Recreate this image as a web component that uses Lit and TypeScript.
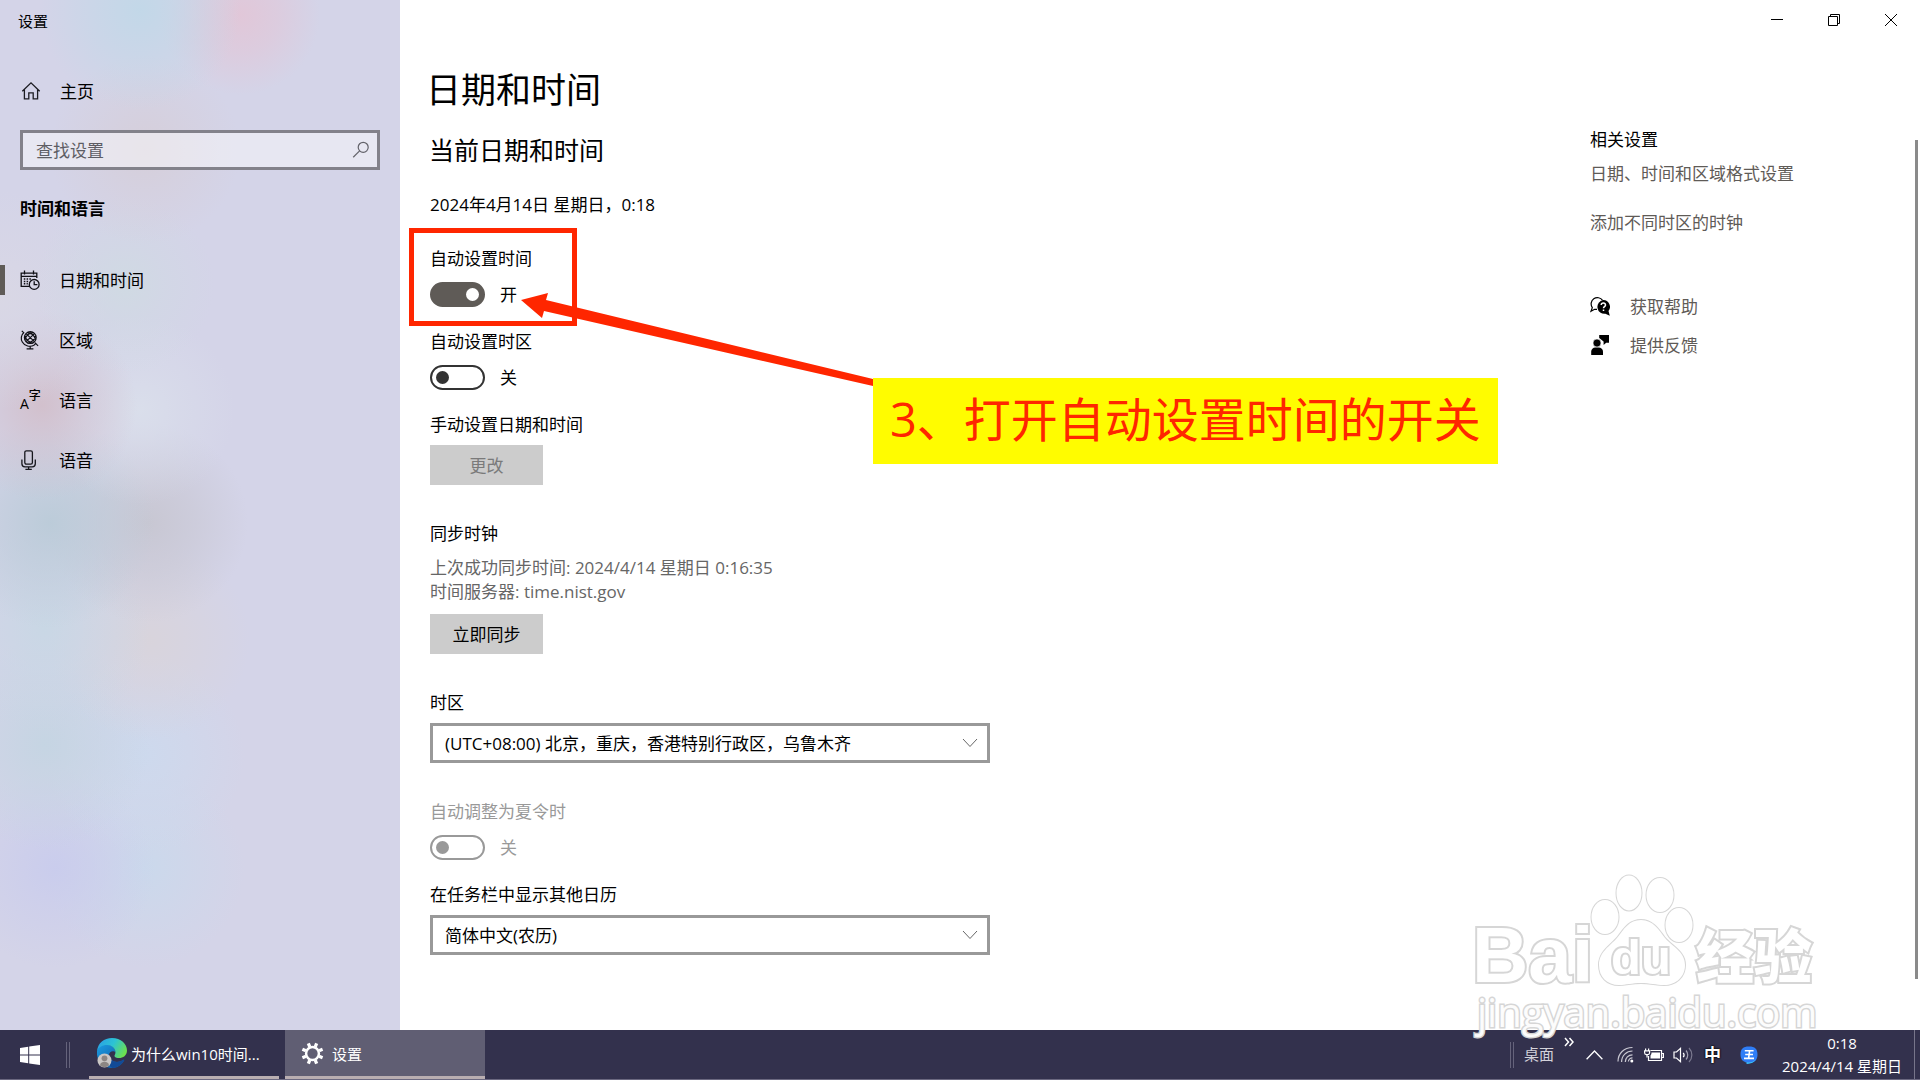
import { LitElement, html, svg, css, nothing } from "lit";
import { customElement, property, state } from "lit/decorators.js";
import { classMap } from "lit/directives/class-map.js";

const icons = {
  home: svg`<svg viewBox="0 0 20 20" width="20" height="20" fill="none" stroke="#1c1c22" stroke-width="1.3"><path d="M1.3 10.2 10 1.8l8.7 8.4M3.4 8.6v9.2h4.4v-6h4.4v6h4.4V8.6"/></svg>`,
  date: svg`<svg viewBox="0 0 20 20" width="20" height="20" fill="none" stroke="#101016" stroke-width="1.3"><path d="M9 16.400H1.200V3.100h15.600v5M1.200 6.400h15.600M4.500.600v4M13.500.600v4"/><circle cx="14.200" cy="14.400" r="4.900"/><path d="M14.200 11.200v3.400h3.200"/><path stroke-width="1.500" stroke-dasharray="1.500 1.300" d="M3.800 9h7.500M3.800 11.400h5M3.800 13.800h4"/></svg>`,
  region: svg`<svg viewBox="0 0 20 20" width="20" height="20" fill="none" stroke="#101016" stroke-width="1.200"><circle cx="10.300" cy="7.600" r="5.900"/><path d="M6 3.600 14.500 11.600M14.500 3.600 6 11.600M7.200 2.600C10.500 2.400 15 5.500 15.600 9.800M13.400 2.600C10 2.400 5.500 5.500 5 9.800M4.800 5.600c.8 4 4.500 7.400 8.400 7.400M15.800 5.600c-.8 4-4.500 7.400-8.400 7.400"/><path d="M1.800.800 3.700 2.700C1 5 .600 9 2.300 12c2.300 4.200 8 5.500 12 2.900l1.300-1.300M14.900 12.700l3.200 3.200M10.200 15.800v3M6.600 18.900h6.800"/></svg>`,
  language: html`<span class="lang"><span class="lang-a">A</span><span class="lang-z">字</span></span>`,
  speech: svg`<svg viewBox="0 0 20 20" width="20" height="20" fill="none" stroke="#16161c" stroke-width="1.3"><rect x="4.800" y=".8" width="7.600" height="13.400" rx="1.600"/><path d="M1.900 9.600v4.200c0 1.800 1.200 3 3 3h7.400c1.800 0 3-1.200 3-3V9.600M8.600 16.800v2.600M5.400 19.300h6.400"/></svg>`,
  search: svg`<svg viewBox="0 0 18 18" width="18" height="18" fill="none" stroke="#62626a" stroke-width="1.200"><circle cx="11.200" cy="6.300" r="5"/><path d="M7.600 9.900 1.200 16.200"/></svg>`,
  chevron: svg`<svg class="chev" viewBox="0 0 16 10" width="16" height="10" fill="none" stroke="#666" stroke-width="1"><path d="M1 1l7 7.500L15 1"/></svg>`,
  help: svg`<svg viewBox="0 0 20 20" width="20" height="20"><path fill="none" stroke="#000" stroke-width="1.200" d="M7 13.300H4.600L1 15.200l1.300-3.600A6.200 6.200 0 1 1 12.600 4.300"/><path d="M13.300 4a6.800 6.800 0 0 1 5.200 11l1.300 4.700-4.400-2A6.800 6.800 0 1 1 13.300 4z"/><path fill="none" stroke="#fff" stroke-width="1.500" d="M11.200 9c.1-2.600 4.500-2.500 4.300.1-.1 1.400-2 1.600-2 3.100M13.500 13.400v1.500"/></svg>`,
  feedback: svg`<svg viewBox="0 0 20 20" width="20" height="20"><path d="M9.200 0H19v7.800h-2.800L13.600 10V6.600L9.200 3z"/><circle cx="7" cy="8" r="4" stroke="#fff" stroke-width=".6"/><path d="M1.200 20v-3.200c0-2.700 1.800-4.300 4.200-4.300h3.200c2.500 0 4.400 1.600 4.400 4.300V20z"/></svg>`,
};

const sharedText = css`
  * { box-sizing: border-box; }
  button, input, select { font: inherit; color: inherit; }
`;

@customElement("toggle-field")
class ToggleField extends LitElement {
  @property() label = "";
  @property({ type: Boolean }) on = false;
  @property({ type: Boolean }) disabled = false;

  static styles = [sharedText, css`
    :host { display: block; }
    .label { display: block; line-height: 26px; }
    .row { display: flex; align-items: center; gap: 15px; height: 25px; margin-top: 10px; line-height: 26px; }
    .switch {
      appearance: none; margin: 0; width: 55px; height: 25px; border-radius: 13px;
      border: 2px solid #333; background: #fff; display: flex; align-items: center; padding: 0 4px;
    }
    .switch::before { content: ""; width: 13px; height: 13px; border-radius: 50%; background: #333; }
    .switch:checked { background: #5f5b57; border-color: #5f5b57; justify-content: flex-end; }
    .switch:checked::before { background: #fff; }
    .off { color: #999; }
    .off .switch { border-color: #999; }
    .off .switch::before { background: #999; }
  `];

  render() {
    return html`<div class=${classMap({ off: this.disabled })}>
      <label class="label" for="sw">${this.label}</label>
      <div class="row">
        <input id="sw" class="switch" type="checkbox" role="switch" .checked=${this.on} ?disabled=${this.disabled}
          @change=${(e: Event) => (this.on = (e.target as HTMLInputElement).checked)} />
        <span>${this.on ? "开" : "关"}</span>
      </div>
    </div>`;
  }
}

@customElement("select-field")
class SelectField extends LitElement {
  @property() label = "";
  @property() value = "";

  static styles = [sharedText, css`
    :host { display: block; }
    .label { display: block; line-height: 26px; }
    .box { display: grid; align-items: center; margin-top: 7px; max-width: 560px; }
    .box > * { grid-area: 1 / 1; }
    .select {
      appearance: none; width: 100%; height: 40px; border: 3px solid #999; border-radius: 0;
      background: #fff; padding: 2px 40px 0 12px;
    }
    .chev { justify-self: end; margin-right: 12px; pointer-events: none; }
  `];

  render() {
    return html`<label class="label" for="sel">${this.label}</label>
      <div class="box">
        <select id="sel" class="select"><option>${this.value}</option></select>
        ${icons.chevron}
      </div>`;
  }
}

@customElement("settings-nav")
class SettingsNav extends LitElement {
  @state() private current = 0;
  private items = [
    { icon: icons.date, text: "日期和时间" },
    { icon: icons.region, text: "区域" },
    { icon: icons.language, text: "语言" },
    { icon: icons.speech, text: "语音" },
  ];

  static styles = [sharedText, css`
    :host {
      display: block;
      background:
        radial-gradient(circle at 140px 10px, #c1d8e8ee, #c1d8e888 45px, #c1d8e800 100px),
        radial-gradient(circle at 240px 15px, #e3c5d6dd, #e3c5d688 38px, #e3c5d600 80px),
        radial-gradient(circle at 145px 150px, #d6cdd6cc, #d6cdd666 45px, #d6cdd600 95px),
        radial-gradient(circle at 125px 285px, #cedce1bb, #cedce155 40px, #cedce100 90px),
        radial-gradient(circle at 0 300px, #dad8e4cc, #dad8e466 50px, #dad8e400 110px),
        radial-gradient(circle at 42px 405px, #d2bfcbee, #d2bfcb77 42px, #d2bfcb00 95px),
        radial-gradient(circle at 140px 410px, #dadfebee, #dadfeb77 42px, #dadfeb00 95px),
        radial-gradient(circle at 50px 523px, #bacbd8ee, #bacbd888 48px, #bacbd800 105px),
        radial-gradient(circle at 148px 523px, #c7c6d1ee, #c7c6d188 48px, #c7c6d100 100px),
        radial-gradient(circle at 45px 628px, #c6d8e4cc, #c6d8e466 48px, #c6d8e400 105px),
        radial-gradient(circle at 150px 640px, #d9d4dadd, #d9d4da77 48px, #d9d4da00 100px),
        radial-gradient(circle at 45px 745px, #c3d5e2dd, #c3d5e277 48px, #c3d5e200 105px),
        radial-gradient(circle at 145px 755px, #ccdaeedd, #ccdaee77 48px, #ccdaee00 100px),
        radial-gradient(circle at 55px 868px, #c9ccedee, #c9cced77 48px, #c9cced00 100px),
        radial-gradient(circle at 145px 868px, #cad9ecee, #cad9ec77 48px, #cad9ec00 100px),
        #d4d4e8;
    }
    .title { height: 40px; line-height: 42px; padding-left: 18px; font-size: 15px; }
    .home, .item {
      display: flex; align-items: center; width: 100%; border: 0; background: none; text-align: left;
      text-decoration: none; color: #000; padding: 0 0 0 20px; gap: 19px; cursor: pointer;
    }
    .home { height: 50px; margin-top: 26px; padding-left: 21px; }
    .home span, .item > span:last-child { padding-top: 2px; }
    .search { display: grid; align-items: center; margin: 14px 20px 0; }
    .search > * { grid-area: 1 / 1; }
    .search svg { justify-self: end; margin-right: 10px; }
    .box {
      width: 100%; height: 40px; border: 3px solid #82818a; border-radius: 0; padding: 0 40px 0 13px;
      background: #ffffff73; outline: none;
    }
    .box::placeholder { color: #5d5d64; opacity: 1; }
    .group { margin: 27px 20px 0; line-height: 24px; font-size: inherit; font-weight: 700; }
    .list { list-style: none; margin: 29px 0 0; padding: 0; }
    .item { height: 60px; border: 0; background: linear-gradient(#5f5b57, #5f5b57) no-repeat -5px 50% / 5px 30px; }
    .item.on { background-position: 0 50%; }
    .lang { width: 20px; height: 20px; display: flex; line-height: 1; }
    .lang-a { font-size: 14px; line-height: 12px; align-self: flex-end; font-weight: 500; }
    .lang-z { font-size: 12px; line-height: 12px; font-weight: 500; }
  `];

  render() {
    return html`
      <div class="title">设置</div>
      <a class="home" href="#home">${icons.home}<span>主页</span></a>
      <div class="search">
        <input class="box" type="search" placeholder="查找设置" aria-label="查找设置" />
        ${icons.search}
      </div>
      <h2 class="group">时间和语言</h2>
      <ul class="list">
        ${this.items.map((it, i) => html`<li>
          <button class=${classMap({ item: true, on: i === this.current })} @click=${() => (this.current = i)}
            aria-current=${i === this.current ? "page" : nothing}>${it.icon}<span>${it.text}</span></button>
        </li>`)}
      </ul>`;
  }
}

@customElement("task-bar")
class TaskBar extends LitElement {
  static styles = [sharedText, css`
    :host {
      display: flex; align-items: stretch; height: 50px; background: #33314d; color: #fff;
      border-bottom: 1px solid #6b6880; font-size: 15px; line-height: 23px;
    }
    button { border: 0; background: none; padding: 0; display: flex; align-items: center; text-align: left; color: #fff; }
    .start { width: 60px; justify-content: center; }
    .grip { width: 4px; height: 26px; align-self: center; border: solid #65637b; border-width: 0 1px; }
    .grip.a { margin-left: 6px; }
    .app { border-bottom: 3px solid #b9aeb1; }
    .app span { padding-top: 2px; }
    .edge { width: 190px; margin-left: 19px; padding-left: 8px; gap: 4px; }
    .set { width: 200px; margin-left: 6px; padding-left: 16px; gap: 8px; background: #605e73; }
    .tray { margin-left: auto; display: flex; align-items: center; }
    .desk { margin-left: 10px; color: #d3d2da; }
    .more { align-self: flex-start; margin: 7px 0 0 10px; }
    .up { margin-left: 12px; }
    .wifi { margin-left: 14px; }
    .bat { margin-left: 10px; }
    .vol { margin-left: 9px; }
    .ime { margin-left: 9px; font-size: 17px; font-weight: 700; text-shadow: 0 0 2px #000, 0 0 2px #000; }
    .wang { margin-left: 19px; }
    .clock { margin-left: 22px; width: 124px; flex-direction: column; justify-content: center; text-align: center; white-space: nowrap; }
    .show { width: 6px; align-self: stretch; margin-left: 10px; border-left: 1px solid #77758a; }
  `];

  render() {
    return html`
      <button class="start" aria-label="开始">
        <svg viewBox="0 0 20 20" width="20" height="20" fill="#fff"><path d="M0 2.900 8.200 1.700v7.800H0zM9.200 1.500 20 0v9.500H9.200zM0 10.500h8.200v7.800L0 17.100zM9.200 10.500H20V20L9.200 18.500z"/></svg>
      </button>
      <span class="grip a"></span>
      <button class="app edge">
        <svg viewBox="0 0 30 30" width="30" height="30">
          <defs>
            <linearGradient id="g1" x1="0" x2="1" y1=".2" y2=".6"><stop offset="0" stop-color="#2a9fe6"/><stop offset=".5" stop-color="#2cc3d4"/><stop offset="1" stop-color="#6ee04c"/></linearGradient>
            <linearGradient id="g2" x1="0" x2="1" y1="0" y2="1"><stop offset="0" stop-color="#1b9de2"/><stop offset="1" stop-color="#0f4f9c"/></linearGradient>
          </defs>
          <path fill="url(#g2)" d="M0 13C1 8 6 6 10 6.500c5 .5 8.500 4 8.800 8-2-2.500-6.800-1.500-6.800 2.500 0 4.500 5 7.500 9.500 6.800 1.800-.3 3.500-1 5-2 .6-.3 1 0 .6.600C24.500 27 20 30 15 30 6 30-1 23 0 13z"/>
          <path fill="#124a96" d="M12 17c0 4.500 5 7.500 9.500 6.800 1.800-.3 3.500-1 5-2 .6-.3 1 0 .6.600C24.800 26.500 20.500 29.600 15.500 30 10 27 9 19 12 17z"/>
          <path fill="url(#g1)" d="M0 13C1 5 7 0 15 0c9 0 15 6 15 12.500 0 5-4 7.500-8 7.500-3.500 0-5.500-1.500-4-3.500C20 12.500 16 7 10 7 5 7 1.500 9.500 0 13z"/>
          <circle cx="7.500" cy="22.500" r="7" fill="#cac7c5"/><circle cx="7.500" cy="20.300" r="2.900" fill="#8c8683"/><path fill="#8c8683" d="M3 27.500c0-5 9-5 9 0-2.500 2-6.500 2-9 0z"/>
        </svg>
        <span>为什么win10时间...</span>
      </button>
      <button class="app set">
        <svg viewBox="-12 -12 24 24" width="23" height="23" fill="none" stroke="#fff">
          <circle r="6.700" stroke-width="2.600"/>
          ${[22.5, 67.5, 112.5, 157.5, 202.5, 247.5, 292.5, 337.5].map((a) => svg`<path stroke-width="3.400" d="M0-7.400V-11.400" transform=${`rotate(${a})`}/>`)}
        </svg>
        <span>设置</span>
      </button>
      <div class="tray">
        <span class="grip"></span>
        <button class="desk">桌面</button>
        <button class="more" aria-label="更多"><svg viewBox="0 0 10 10" width="10" height="10" fill="none" stroke="#fff" stroke-width="1.500"><path d="M1 1l3.500 4L1 9M5.500 1 9 5 5.500 9"/></svg></button>
        <button class="up" aria-label="显示隐藏的图标"><svg viewBox="0 0 17 10" width="17" height="10" fill="none" stroke="#fff" stroke-width="1.300"><path d="M.6 9.300 8.500 1l7.900 8.300"/></svg></button>
        <button class="wifi" aria-label="网络"><svg viewBox="0 0 17 17" width="17" height="17" fill="none" stroke="#fff" stroke-width="1.200"><path stroke="#c9c8d2" d="M1 15.500C1 7.500 7 1.500 15.500 1.500M4.600 16C4.600 9.500 9.500 5 15.500 5M8.300 16c0-4 3-7.200 7.200-7.200M11.400 15.500c0-2 2-3.700 4.100-3.700"/><circle cx="14.800" cy="15" r="1.500" fill="#fff" stroke="none"/></svg></button>
        <button class="bat" aria-label="电源"><svg viewBox="0 0 20 14" width="20" height="14" fill="none" stroke="#fff" stroke-width="1.200"><path d="M6.500 2.500h11v10H4.500V8M18 5.500h1.400v4H18M1.600.5v2.300M4.600.5v2.300M.6 2.800h5v2c0 1-.8 1.800-1.800 1.800H2.400C1.400 6.600.6 5.800.6 4.800zM3 6.600v3"/><path fill="#fff" stroke="none" d="M7.500 4.500H16v6H6.500V7.400c.7-.8 1-1.500 1-2.900z"/></svg></button>
        <button class="vol" aria-label="音量"><svg viewBox="0 0 22 18" width="22" height="18" fill="none" stroke="#fff" stroke-width="1.200"><path d="M1 6h2.500L7.500 2.300v13.400L3.500 12H1zM10.200 6.800c1 1.200 1 3.200 0 4.400"/><path stroke="#a3a1b3" d="M13 4.500c2.300 2.500 2.300 6.500 0 9"/><path stroke="#7c7a90" d="M16 2c3.800 4 3.800 10 0 14"/></svg></button>
        <button class="ime">中</button>
        <button class="wang" aria-label="输入法"><svg viewBox="0 0 18 18" width="18" height="18"><path fill="#2f7df6" d="M9 .5c6 0 8.500 2.500 8.500 8s-3 8-7 8.500l-4 .8.4-1.300C2.500 15.700.5 13 .5 8.500.5 3 3 .5 9 .5z"/><path fill="#3cc8f5" d="M4.500 15.800c4 1.400 8.500.8 11-2.200-1 2.800-4.800 4.300-9 4.400l.4-1.200z"/><path stroke="#fff" stroke-width="1.600" d="M4.800 4.800h8.800M5.200 8.500h7.800M4 12.400h10M9.600 4.800 8.600 12.400"/></svg></button>
        <button class="clock"><span>0:18</span><span>2024/4/14 星期日</span></button>
        <span class="show"></span>
      </div>`;
  }
}

@customElement("app-root")
class AppRoot extends LitElement {
  static styles = [sharedText, css`
    :host {
      display: grid; grid-template-rows: 1fr auto; min-height: 100vh; position: relative; overflow: hidden;
      font-family: "Open Sans", "Noto Sans CJK SC", sans-serif; font-size: 17px; line-height: 24px; color: #000; background: #fff;
    }
    .window { display: grid; grid-template-columns: 400px 1fr; }
    .page { position: relative; display: grid; grid-template-rows: 40px 1fr; min-width: 0; }
    .caption { display: flex; justify-content: flex-end; padding-right: 1px; }
    .caption button { width: 57px; border: 0; background: none; padding: 0; display: grid; place-items: center; }
    .body { display: grid; grid-template-columns: 1fr 325px 5px; padding-left: 30px; }
    h1, h2, p { margin: 0; font-weight: 400; }
    p { line-height: 26px; }
    h1 { font-size: 35px; line-height: 48px; margin-top: 26px; margin-left: -4px; }
    h2 { font-size: 25px; line-height: 32px; margin-top: 20px; margin-left: -1px; }
    .now { margin-top: 26px; }
    .first { margin-top: 28px; }
    .near { margin-top: 22px; }
    .far { margin-top: 36px; }
    .muted { color: #666; margin-top: 9px; line-height: 24px; }
    .btn { display: block; min-width: 113px; height: 40px; border: 0; padding: 2px 20px 0; background: #ccc; margin-top: 7px; }
    .btn.sync { margin-top: 10px; }
    .btn:disabled { color: #7a7a7a; }
    .related { padding-top: 88px; }
    .related h3 { margin: 0; font-size: inherit; font-weight: 400; }
    .related a { display: flex; align-items: center; gap: 20px; color: #5f5b57; text-decoration: none; }
    .related a span { padding-top: 2px; }
    .related .l1 { margin-top: 10px; }
    .related .l2 { margin-top: 25px; }
    .related .l3 { margin-top: 58px; }
    .related .l4 { margin-top: 13px; }
    .bar { width: 3px; background: #8a8a8a; margin: 100px 0 51px; }
    .frame { position: absolute; left: 9px; top: 228px; width: 168px; height: 98px; border: 5px solid #ff2600; }
    .arrow { position: absolute; left: 120px; top: 290px; }
    .note {
      position: absolute; left: 473px; top: 378px; height: 86px; padding: 0 17px; background: #fffc00; color: #ff2600;
      font-size: 47px; line-height: 82px; white-space: nowrap;
    }
    .mark { position: absolute; right: 90px; bottom: 34px; pointer-events: none; }
  `];

  render() {
    return html`
      <div class="window">
        <settings-nav></settings-nav>
        <div class="page">
          <div class="caption">
            <button aria-label="最小化"><svg width="12" height="12" stroke="#000"><path d="M0 5.500h12"/></svg></button>
            <button aria-label="还原"><svg width="12" height="12" fill="none" stroke="#000"><path d="M.5 2.500h9v9h-9zM2.500 2.500v-2h9v9h-2"/></svg></button>
            <button aria-label="关闭"><svg width="12" height="12" stroke="#000"><path d="M0 0l12 12M12 0 0 12"/></svg></button>
          </div>
          <div class="body">
            <main>
              <h1>日期和时间</h1>
              <h2>当前日期和时间</h2>
              <p class="now">2024年4月14日 星期日，0:18</p>
              <toggle-field class="first" label="自动设置时间" on></toggle-field>
              <toggle-field class="near" label="自动设置时区"></toggle-field>
              <p class="near" id="manual">手动设置日期和时间</p>
              <button class="btn" disabled aria-describedby="manual">更改</button>
              <p class="far">同步时钟</p>
              <p class="muted">上次成功同步时间: 2024/4/14 星期日 0:16:35<br />时间服务器: time.nist.gov</p>
              <button class="btn sync">立即同步</button>
              <select-field class="far" label="时区" value="(UTC+08:00) 北京，重庆，香港特别行政区，乌鲁木齐"></select-field>
              <toggle-field class="far" label="自动调整为夏令时" disabled></toggle-field>
              <select-field class="near" label="在任务栏中显示其他日历" value="简体中文(农历)"></select-field>
            </main>
            <aside class="related">
              <h3>相关设置</h3>
              <a class="l1" href="#format">日期、时间和区域格式设置</a>
              <a class="l2" href="#clocks">添加不同时区的时钟</a>
              <a class="l3" href="#help">${icons.help}<span>获取帮助</span></a>
              <a class="l4" href="#feedback">${icons.feedback}<span>提供反馈</span></a>
            </aside>
            <div class="bar"></div>
          </div>
          <div class="frame"></div>
          <svg class="arrow" width="354" height="98" fill="#ff2600"><path d="M1 10 28 3 26 10 353 89V96L24 21 22 28z"/></svg>
          <div class="note">3、打开自动设置时间的开关</div>
        </div>
      </div>
      <task-bar></task-bar>
      <svg class="mark" width="360" height="176" viewBox="1470 870 360 176" fill="#fff" stroke="#d6d6d6" stroke-width="2" font-family="'Liberation Sans', 'Noto Sans CJK SC', sans-serif" font-weight="700" paint-order="stroke">
        <text x="1472" y="982" font-size="78" stroke-width="4">Bai</text>
        <ellipse cx="1605" cy="917" rx="13.500" ry="17"/>
        <ellipse cx="1629" cy="893" rx="12.500" ry="17.500"/>
        <ellipse cx="1660" cy="895" rx="13.500" ry="17"/>
        <ellipse cx="1679" cy="925" rx="13.500" ry="17"/>
        <path d="M1641 920c12 0 18 10 24 18 8 9 20 14 20 27 0 12-9 20-21 20-8 0-14-2-23-2s-15 2-22 2c-12 0-20-8-20-20 0-13 11-19 18-27 7-9 12-18 24-18z"/>
        <text x="1611" y="974" font-size="49" stroke-width="4" font-weight="700">du</text>
        <text x="1696" y="978" font-size="58" stroke-width="4" font-weight="900">经验</text>
        <text x="1477" y="1027" font-size="40" stroke-width="3" fill-opacity=".95" font-weight="500" font-family="'Open Sans', sans-serif">jingyan.baidu.com</text>
      </svg>`;
  }
}
